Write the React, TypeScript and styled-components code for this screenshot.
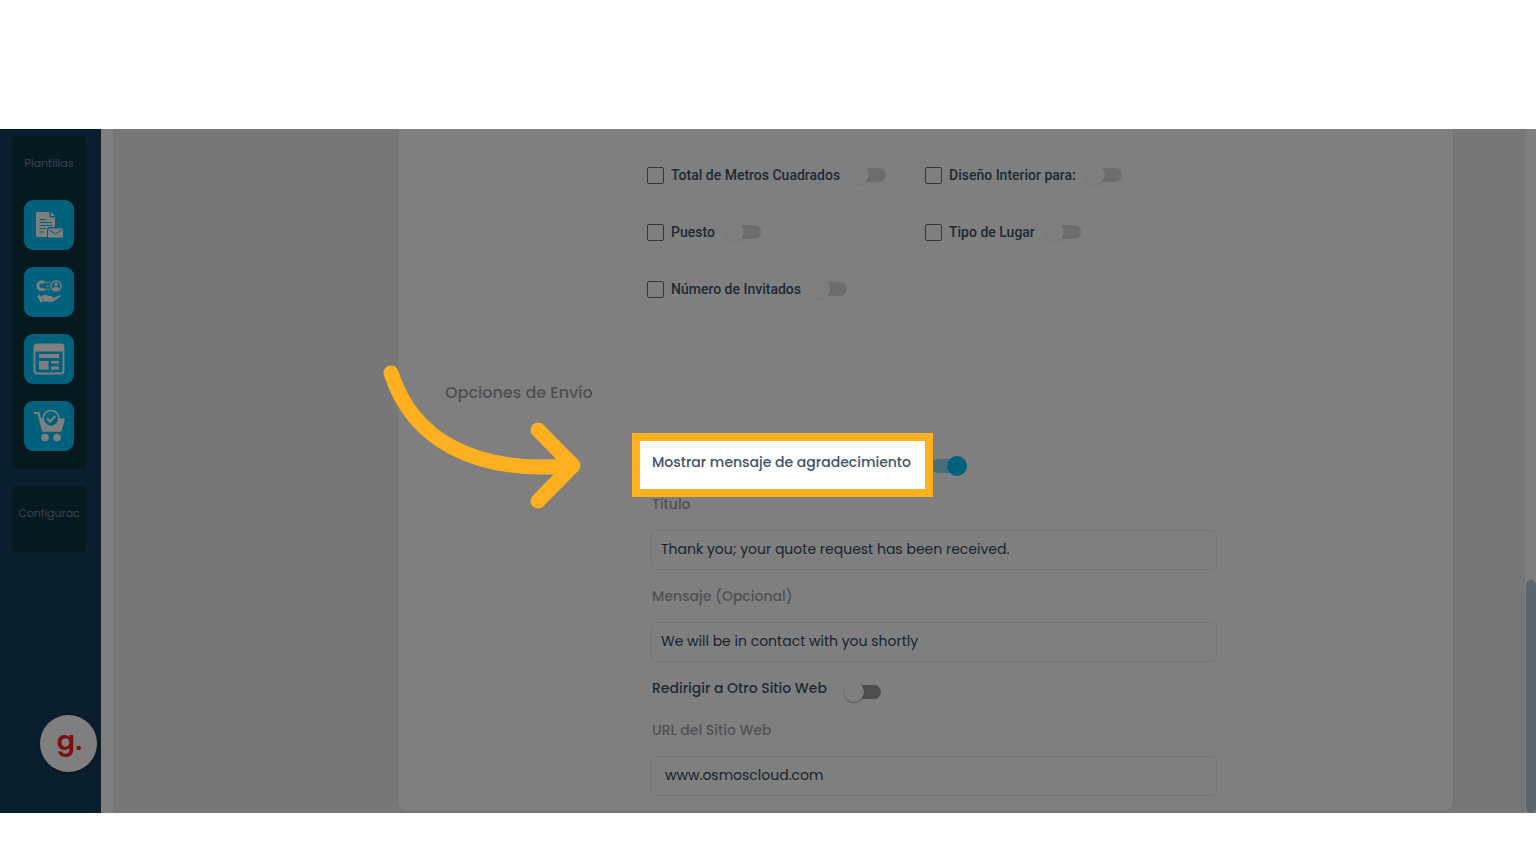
import React from "react";
import styled, { createGlobalStyle, css } from "styled-components";

const ui = `Poppins, Inter, "Liberation Sans", sans-serif`;

const Global = createGlobalStyle`
  *, *::before, *::after { box-sizing: border-box; }
  body { margin: 0; background: #fff; font-family: ${ui}; }
`;

const Page = styled.main`
  padding: 129px 0 52px;
`;

const Stage = styled.div`
  position: relative;
  isolation: isolate;
  overflow: hidden;
  display: flex;
  background: #fff;
`;

const Sidebar = styled.nav`
  position: relative;
  flex: 0 0 101px;
  display: flex;
  flex-direction: column;
  gap: 17px;
  padding: 7px 15px 0 12px;
  background: #143e5a;
`;

const NavGroup = styled.section<{ $short?: boolean }>`
  display: flex;
  flex-direction: column;
  align-items: center;
  gap: 17px;
  padding: ${(p) => (p.$short ? "19px 0 31px" : "19px 0 18px")};
  border-radius: 4px;
  background: #0c323f;
`;

const NavTitle = styled.h2<{ $spaced?: boolean }>`
  margin: 0 0 ${(p) => (p.$spaced ? "12px" : "0")};
  font-size: 11px;
  line-height: 16px;
  font-weight: 400;
  color: #7389a0;
`;

const Tile = styled.button`
  display: grid;
  place-items: center;
  width: 50px;
  height: 50px;
  padding: 0;
  border: 0;
  border-radius: 9px;
  background: #00c3fb;
  cursor: pointer;
`;

const HelpBubble = styled.button`
  position: absolute;
  right: 4px;
  bottom: 41px;
  width: 57px;
  height: 57px;
  padding: 0 0 6px 2px;
  border: 0;
  border-radius: 50%;
  background: #fff;
  box-shadow: 0 2px 6px rgba(0, 0, 0, 0.3);
  color: #ff1a1a;
  font: 600 27px/1 ${ui};
`;

const Content = styled.div`
  flex: 1;
  margin-left: 12px;
  padding: 0 71px 1px 284px;
  background: #eceff2;
`;

const Card = styled.div`
  padding: 37px 236px 15px 47px;
  border: 1px solid #e3e8ea;
  border-top: 0;
  border-radius: 0 0 10px 10px;
  background: #fff;
`;

const Options = styled.div`
  display: grid;
  grid-template-columns: 278px 1fr;
  row-gap: 39px;
  margin-left: 202px;
`;

const Option = styled.div`
  display: flex;
  align-items: center;
  height: 18px;
`;

const OptionLabel = styled.label`
  display: flex;
  align-items: center;
  gap: 7px;
  margin-right: 12px;
  font: 500 14px/18px Roboto, sans-serif;
  color: #3f5268;
  white-space: nowrap;
`;

const Check = styled.input`
  appearance: none;
  width: 17px;
  height: 17px;
  margin: 0;
  border: 1px solid #6a6a6a;
  border-radius: 2px;
  background: #fff;
`;

const Switch = styled.input<{ $muted?: boolean }>`
  appearance: none;
  position: relative;
  flex: none;
  width: 34px;
  height: 14px;
  margin: 0;
  border-radius: 7px;
  background: ${(p) => (p.$muted ? "#dadada" : "#9c9c9c")};
  &::before {
    content: "";
    position: absolute;
    top: -3px;
    left: -3px;
    width: 20px;
    height: 20px;
    border-radius: 50%;
    background: ${(p) => (p.$muted ? "#fcfcfc" : "#fff")};
    box-shadow: 0 1px 2px rgba(0, 0, 0, ${(p) => (p.$muted ? 0.08 : 0.35)});
  }
  &:checked {
    background: #93dcf2;
  }
  &:checked::before {
    left: 16px;
    background: #00c3fb;
    box-shadow: none;
  }
`;

const Heading = styled.h1`
  margin: 83px 0 45px;
  font-size: 16px;
  line-height: 24px;
  font-weight: 500;
  color: #9aa0a8;
`;

const Form = styled.form`
  display: flex;
  flex-direction: column;
  gap: 14px;
  margin-left: 206px;
`;

const ToggleRow = styled.div`
  display: flex;
  align-items: flex-start;
  gap: 20px;
  height: 28px;
  padding-left: 1px;

  ${Switch} {
    margin-top: 9px;
  }
`;

const formText = css`
  display: block;
  font-size: 14px;
  line-height: 24px;
  font-weight: 500;
  white-space: nowrap;
`;

const ToggleLabel = styled.label`
  ${formText}
  color: #3f5268;
`;

const Anchor = styled.div`
  position: relative;
`;

/* The shadow dims everything in the stage except the framed label. */
const Spotlight = styled.div`
  position: absolute;
  z-index: 2;
  inset: -17px -22px -23px -20px;
  border: 8px solid #ffb020;
  box-shadow: 0 0 0 2000px rgba(0, 0, 0, 0.5);
  pointer-events: none;
`;

const Arrow = styled.svg`
  position: absolute;
  z-index: 3;
  right: calc(100% + 70px);
  top: -86px;
  width: 198px;
  height: 146px;
  overflow: visible;
  pointer-events: none;
`;

const FieldLabel = styled.label`
  ${formText}
  margin-bottom: 14px;
  padding-left: 1px;
  color: #a0a4aa;
`;

const Field = styled.input<{ $inset?: boolean }>`
  display: block;
  width: 100%;
  height: 40px;
  padding: 0 ${(p) => (p.$inset ? "13px" : "9px")} 2px;
  border: 1px solid #e6eaeb;
  border-radius: 5px;
  background: #fff;
  font: 400 14px/24px ${ui};
  color: #34475e;
`;

const ScrollTrack = styled.div`
  flex: 0 0 11px;
  display: flex;
  flex-direction: column;
  justify-content: flex-end;
  align-items: flex-end;
  background: #fff;
`;

const ScrollThumb = styled.div`
  width: 10px;
  height: 34%;
  border-radius: 5px;
  background: #b6ccd8;
`;

const FG = "#fff";
const BG = "#00c3fb";

const QuoteIcon = () => (
  <svg width="28" height="28" viewBox="0 0 28 28" aria-hidden="true">
    <path d="M1 2.500Q1 1 2.500 1H14.500V6.500H20V16H14.500Q12 16 12 18.500V26H2.500Q1 26 1 24.500Z" fill={FG} />
    <path d="M16 1L20 5H16Z" fill={FG} />
    <path d="M4.500 8.500H11M4.500 11.500H17M4.500 14.500H17M4.500 17.500H11M4.500 21H9" stroke={BG} strokeWidth="1.100" />
    <rect x="13" y="17.500" width="15" height="9" rx="1" fill={FG} />
    <path d="M13.500 18.500L20.500 23L27.500 18.500" fill="none" stroke={BG} strokeWidth="1" />
  </svg>
);

const LeadIcon = () => (
  <svg width="28" height="28" viewBox="0 0 28 28" fill="none" aria-hidden="true">
    <path d="M9.500 4H6.500A3.700 3.700 0 0 0 6.500 11.500H9.500" stroke={FG} strokeWidth="3" />
    <path d="M10.500 4.500H15M10.500 11.500H15M11.500 8H15" stroke={FG} strokeWidth="1.600" strokeDasharray="2 1" />
    <circle cx="21" cy="8" r="5" stroke={FG} strokeWidth="1.400" />
    <circle cx="21" cy="6.500" r="1.800" fill={FG} />
    <path d="M18 11.500Q18 8.800 21 8.800T24 11.500Q21 13.500 18 11.500Z" fill={FG} />
    <path d="M2 18L5 17L8 23.500L6 25Z" fill={FG} />
    <path d="M6 18.500Q9.500 15.500 13 18H17Q18.500 19 17 20L20 19.500L25 17Q26.500 17.200 25.500 18.500L19 23Q17 24.500 13 23.500L8.500 23.500Z" fill={FG} />
  </svg>
);

const PageIcon = () => (
  <svg width="32" height="32" viewBox="0 0 32 32" aria-hidden="true">
    <rect x="1.500" y="1.500" width="29" height="29" rx="2.500" fill="none" stroke={FG} strokeWidth="1.800" />
    <path d="M1 8.500V3.500Q1 1 3.500 1H28.500Q31 1 31 3.500V8.500Z" fill={FG} />
    <path d="M6 11H26V15H6ZM6 18H15.500V26.500H6ZM18 18H26V20.500H18ZM18 23.500H26V26.500H18Z" fill={FG} />
  </svg>
);

const CartIcon = () => (
  <svg width="32" height="32" viewBox="0 0 32 32" aria-hidden="true">
    <path d="M1 3H5.500L10 20.500H27" fill="none" stroke={FG} strokeWidth="2" />
    <path d="M6 8.500H32L28.500 21.500H9.500Z" fill={FG} />
    <circle cx="18" cy="8.500" r="8" fill={BG} stroke={FG} strokeWidth="1.600" />
    <path d="M14 8.500L17 11.500L22.500 6" fill="none" stroke={FG} strokeWidth="2.200" />
    <circle cx="12" cy="27.500" r="3.800" fill={FG} />
    <circle cx="24" cy="27.500" r="3.800" fill={FG} />
  </svg>
);

const options = [
  "Total de Metros Cuadrados",
  "Diseño Interior para:",
  "Puesto",
  "Tipo de Lugar",
  "Número de Invitados",
];

const TextField = ({ id, label, value, inset }: { id: string; label: string; value: string; inset?: boolean }) => (
  <div>
    <FieldLabel htmlFor={id}>{label}</FieldLabel>
    <Field id={id} type="text" defaultValue={value} $inset={inset} />
  </div>
);

export default function App() {
  return (
    <>
      <Global />
      <Page>
        <Stage>
          <Sidebar>
            <NavGroup>
              <NavTitle $spaced>Plantillas</NavTitle>
              <Tile type="button" aria-label="Cotizaciones"><QuoteIcon /></Tile>
              <Tile type="button" aria-label="Prospectos"><LeadIcon /></Tile>
              <Tile type="button" aria-label="Páginas"><PageIcon /></Tile>
              <Tile type="button" aria-label="Pedidos"><CartIcon /></Tile>
            </NavGroup>
            <NavGroup $short>
              <NavTitle>Configurac</NavTitle>
            </NavGroup>
            <HelpBubble type="button">g.</HelpBubble>
          </Sidebar>
          <Content>
            <Card>
              <Options>
                {options.map((name) => (
                  <Option key={name}>
                    <OptionLabel>
                      <Check type="checkbox" />
                      {name}
                    </OptionLabel>
                    <Switch type="checkbox" role="switch" aria-label={name} $muted />
                  </Option>
                ))}
              </Options>
              <Heading>Opciones de Envío</Heading>
              <Form>
                <ToggleRow>
                  <Anchor>
                    <ToggleLabel htmlFor="thanks">Mostrar mensaje de agradecimiento</ToggleLabel>
                    <Spotlight />
                    <Arrow viewBox="384 364 198 146" aria-hidden="true">
                      <path
                        d="M391 373C412 438 472 475 573 465.500M538 430L573 465.500L538 501"
                        fill="none"
                        stroke="#ffb020"
                        strokeWidth="15"
                        strokeLinecap="round"
                        strokeLinejoin="round"
                      />
                    </Arrow>
                  </Anchor>
                  <Switch id="thanks" type="checkbox" role="switch" defaultChecked />
                </ToggleRow>
                <TextField id="title" label="Título" value="Thank you; your quote request has been received." />
                <TextField id="message" label="Mensaje (Opcional)" value="We will be in contact with you shortly" />
                <ToggleRow>
                  <ToggleLabel htmlFor="redirect">Redirigir a Otro Sitio Web</ToggleLabel>
                  <Switch id="redirect" type="checkbox" role="switch" />
                </ToggleRow>
                <TextField id="url" label="URL del Sitio Web" value="www.osmoscloud.com" inset />
              </Form>
            </Card>
          </Content>
          <ScrollTrack>
            <ScrollThumb />
          </ScrollTrack>
        </Stage>
      </Page>
    </>
  );
}
